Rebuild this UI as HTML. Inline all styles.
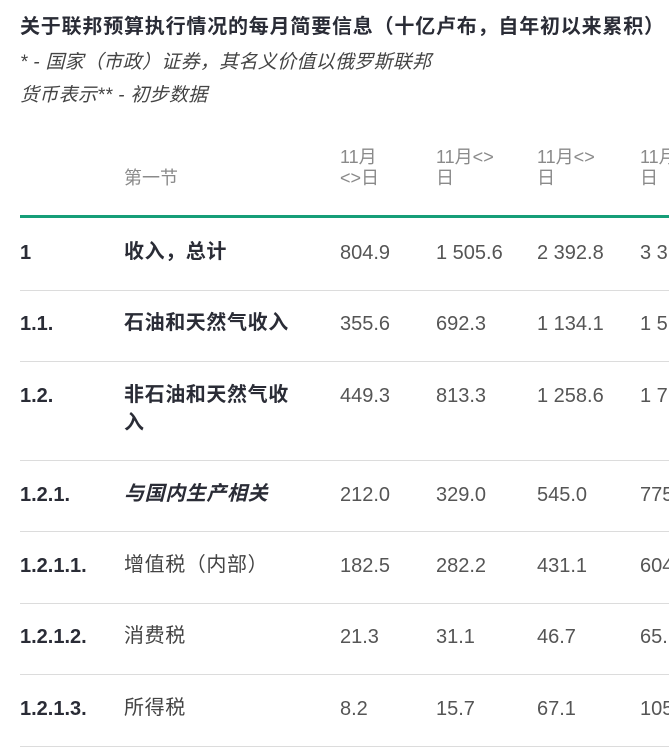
<!DOCTYPE html>
<html><head><meta charset="utf-8"><style>
body{margin:0;width:669px;height:751px;overflow:hidden;background:#fff;font-family:"Liberation Sans","Noto Sans CJK SC",sans-serif;color:#2a2c36;position:relative}
.a{position:absolute;white-space:nowrap;line-height:1}
.t{left:20px;top:17px;font-size:20px;font-weight:bold;letter-spacing:0.8px}
.s{left:20px;font-size:19px;font-style:italic;color:#444;letter-spacing:0.3px}
.h{font-size:18px;color:#8a8a8a;line-height:21px}
.n{font-size:20px;color:#555}
.b{font-weight:bold}
.k{font-size:20px;font-weight:bold}
.c{font-size:20px;letter-spacing:0.6px}
.ln{position:absolute;left:20px;right:0;height:1px;background:#dcdcdc}
</style></head><body>
<div class="a t">关于联邦预算执行情况的每月简要信息（十亿卢布，自年初以来累积）</div>
<div class="a s" style="top:53px">* - 国家（市政）证券，其名义价值以俄罗斯联邦</div>
<div class="a s" style="top:86px">货币表示** - 初步数据</div>

<div class="a h" style="left:124px;top:168px">第一节</div>
<div class="a h" style="left:340px;top:147px">11月<br>&lt;&gt;日</div>
<div class="a h" style="left:436px;top:147px">11月&lt;&gt;<br>日</div>
<div class="a h" style="left:537px;top:147px">11月&lt;&gt;<br>日</div>
<div class="a h" style="left:640px;top:147px">11月<br>日</div>
<div style="position:absolute;left:20px;right:0;top:215px;height:3px;background:#169e78"></div>

<div class="a k" style="left:20px;top:243px">1</div>
<div class="a c b" style="left:124px;top:242px">收入，总计</div>
<div class="a n" style="left:340px;top:243px">804.9</div><div class="a n" style="left:436px;top:243px">1 505.6</div><div class="a n" style="left:537px;top:243px">2 392.8</div><div class="a n" style="left:640px;top:243px">3 3</div>
<div class="ln" style="top:290px"></div>

<div class="a k" style="left:20px;top:314px">1.1.</div>
<div class="a c b" style="left:124px;top:313px">石油和天然气收入</div>
<div class="a n" style="left:340px;top:314px">355.6</div><div class="a n" style="left:436px;top:314px">692.3</div><div class="a n" style="left:537px;top:314px">1 134.1</div><div class="a n" style="left:640px;top:314px">1 5</div>
<div class="ln" style="top:361px"></div>

<div class="a k" style="left:20px;top:386px">1.2.</div>
<div class="a c b" style="left:124px;line-height:28px;top:381px">非石油和天然气收<br>入</div>
<div class="a n" style="left:340px;top:386px">449.3</div><div class="a n" style="left:436px;top:386px">813.3</div><div class="a n" style="left:537px;top:386px">1 258.6</div><div class="a n" style="left:640px;top:386px">1 7</div>
<div class="ln" style="top:460px"></div>

<div class="a k" style="left:20px;top:485px">1.2.1.</div>
<div class="a c b" style="left:124px;top:484px;font-style:italic">与国内生产相关</div>
<div class="a n" style="left:340px;top:485px">212.0</div><div class="a n" style="left:436px;top:485px">329.0</div><div class="a n" style="left:537px;top:485px">545.0</div><div class="a n" style="left:640px;top:485px">775</div>
<div class="ln" style="top:531px"></div>

<div class="a k" style="left:20px;top:556px">1.2.1.1.</div>
<div class="a c" style="left:124px;top:555px;color:#444">增值税（内部）</div>
<div class="a n" style="left:340px;top:556px">182.5</div><div class="a n" style="left:436px;top:556px">282.2</div><div class="a n" style="left:537px;top:556px">431.1</div><div class="a n" style="left:640px;top:556px">604</div>
<div class="ln" style="top:603px"></div>

<div class="a k" style="left:20px;top:627px">1.2.1.2.</div>
<div class="a c" style="left:124px;top:626px;color:#444">消费税</div>
<div class="a n" style="left:340px;top:627px">21.3</div><div class="a n" style="left:436px;top:627px">31.1</div><div class="a n" style="left:537px;top:627px">46.7</div><div class="a n" style="left:640px;top:627px">65.</div>
<div class="ln" style="top:674px"></div>

<div class="a k" style="left:20px;top:699px">1.2.1.3.</div>
<div class="a c" style="left:124px;top:698px;color:#444">所得税</div>
<div class="a n" style="left:340px;top:699px">8.2</div><div class="a n" style="left:436px;top:699px">15.7</div><div class="a n" style="left:537px;top:699px">67.1</div><div class="a n" style="left:640px;top:699px">105</div>
<div class="ln" style="top:746px"></div>
</body></html>
